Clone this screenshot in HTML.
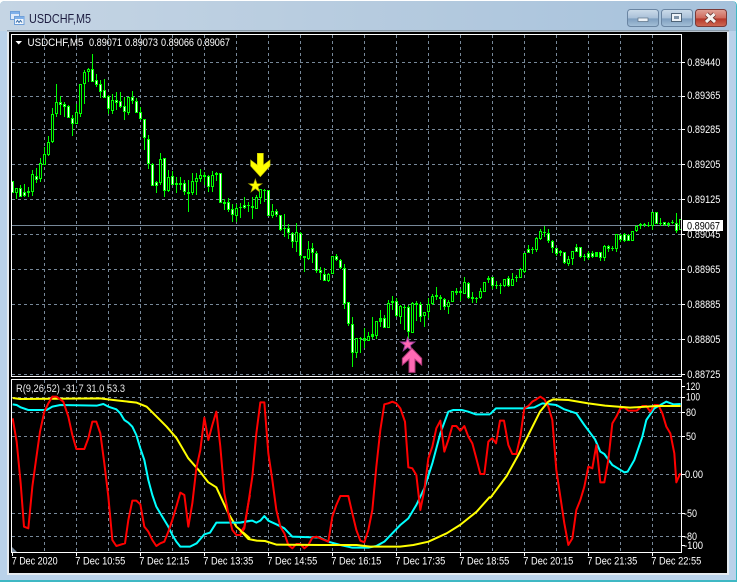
<!DOCTYPE html>
<html><head><meta charset="utf-8"><title>USDCHF,M5</title>
<style>html,body{margin:0;padding:0;background:#fff;overflow:hidden}svg{display:block}text{font-family:"Liberation Sans",sans-serif;fill:#fff;font-size:10.6px}</style></head>
<body>
<svg width="739" height="582" viewBox="0 0 739 582" xmlns="http://www.w3.org/2000/svg">
<defs>
<linearGradient id="tb" x1="0" x2="1" y1="0" y2="0"><stop offset="0" stop-color="#c5d5e4"/><stop offset=".5" stop-color="#b6cbdf"/><stop offset="1" stop-color="#a6c2dc"/></linearGradient>
<linearGradient id="bt" x1="0" x2="0" y1="0" y2="1"><stop offset="0" stop-color="#cddcea"/><stop offset=".5" stop-color="#a9c0d8"/><stop offset=".55" stop-color="#7f9fc0"/><stop offset="1" stop-color="#a5c0d8"/></linearGradient>
<linearGradient id="cl" x1="0" x2="0" y1="0" y2="1"><stop offset="0" stop-color="#e0a298"/><stop offset=".5" stop-color="#cf6a5c"/><stop offset=".55" stop-color="#b5382a"/><stop offset="1" stop-color="#cf6a55"/></linearGradient>
</defs>
<rect width="739" height="582" fill="#fff"/>
<path d="M0 582V6Q0 1 5 1H732Q737 1 737 6V582Z" fill="#3fb8c4"/>
<path d="M0 580V6Q0 1 5 1H731Q736 1 736 6V580Z" fill="#bad2ea"/>
<path d="M0 31V6Q0 1 5 1H731Q736 1 736 6V31Z" fill="url(#tb)"/>
<rect x="7" y="30" width="722" height="545" fill="#e4eaf0"/>
<rect x="7" y="30" width="722" height="1.500" fill="#8a9aa8"/>
<rect x="9" y="32" width="718" height="541" fill="#000"/>

<!-- title bar -->
<g>
<rect x="10.500" y="11.500" width="9" height="8" fill="#dfeafa" stroke="#6f9fd8"/>
<rect x="11" y="12" width="8" height="2" fill="#7fb0ea"/>
<rect x="14.500" y="16.500" width="9.500" height="8" fill="#f2f7fd" stroke="#6f9fd8"/>
<rect x="15" y="17" width="9" height="2" fill="#7fb0ea"/>
<path d="M16 22.500l1.500-2 1.500 2 1.500-2 1.500 2" fill="none" stroke="#3a6ea8"/>
<text x="29" y="23" style="font-size:12.500px;fill:#1c1c40" textLength="62" lengthAdjust="spacingAndGlyphs">USDCHF,M5</text>
<rect x="627.500" y="9.500" width="31" height="17" rx="3" fill="url(#bt)" stroke="#6a85a2"/>
<rect x="638" y="18" width="10" height="3.500" fill="#eef3f8" stroke="#5b6f84" stroke-width=".7"/>
<rect x="661.500" y="9.500" width="31" height="17" rx="3" fill="url(#bt)" stroke="#6a85a2"/>
<rect x="671.500" y="13.500" width="10" height="8" fill="#eef3f8" stroke="#4f6478" stroke-width="1"/>
<rect x="674" y="16" width="5" height="3" fill="#7f93a8"/>
<rect x="695.500" y="9.500" width="31" height="17" rx="3" fill="url(#cl)" stroke="#7a3a38"/>
<path d="M706.500 14l8.500 8M714.500 14l-8.500 8" stroke="#5a2a28" stroke-width="4.500"/>
<path d="M706.500 14l8.500 8M714.500 14l-8.500 8" stroke="#f6f2f0" stroke-width="3"/>
</g>

<!-- grid -->
<g stroke="#778899" stroke-width="1" stroke-dasharray="3 3" shape-rendering="crispEdges" fill="none">
<path d="M12 62.500H681M12 96.500H681M12 129.500H681M12 164.500H681M12 199.500H681M12 234.500H681M12 269.500H681M12 304.500H681M12 339.500H681M12 374.500H681"/>
<path d="M44.500 35V376M76.500 35V376M108.500 35V376M140.500 35V376M172.500 35V376M204.500 35V376M236.500 35V376M268.500 35V376M300.500 35V376M332.500 35V376M364.500 35V376M396.500 35V376M428.500 35V376M460.500 35V376M492.500 35V376M524.500 35V376M556.500 35V376M588.500 35V376M620.500 35V376M652.500 35V376"/>
<path d="M12 397.500H681M12 412.500H681M12 436.500H681M12 474.500H681M12 513.500H681M12 536.500H681"/>
<path d="M44.500 380V552M76.500 380V552M108.500 380V552M140.500 380V552M172.500 380V552M204.500 380V552M236.500 380V552M268.500 380V552M300.500 380V552M332.500 380V552M364.500 380V552M396.500 380V552M428.500 380V552M460.500 380V552M492.500 380V552M524.500 380V552M556.500 380V552M588.500 380V552M620.500 380V552M652.500 380V552"/>
</g>
<rect x="12" y="225" width="669" height="1" fill="#778899"/>

<!-- candles -->
<g transform="translate(.5 0)" fill="none" shape-rendering="crispEdges">
<path stroke="#00ff00" d="M12 181V193M16 188V199M20 185V197M24 184V197M28 187V197M32 170V196M36 168V183M40 158V182M44 147V165M48 136V156M52 108V143M56 84V117M60 96V115M64 102V117M68 105V118M72 115V136M76 104V124M80 84V117M84 70V104M88 68V82M92 54V82M96 74V87M100 80V98M104 79V98M108 95V114M112 94V114M116 92V110M120 92V108M124 97V120M128 97V115M132 91V104M136 98V113M140 107V120M144 119V150M148 135V169M152 163V186M156 181V193M160 153V185M164 158V197M168 170V192M172 171V185M176 177V193M180 177V190M184 180V195M188 180V212M192 173V195M196 173V195M200 169V182M204 172V185M208 175V192M212 171V192M216 172V181M220 173V203M224 199V210M228 198V212M232 204V222M236 204V222M240 203V218M244 197V209M248 202V212M252 197V219M256 195V209M260 189V204M264 189V202M268 190V216M272 204V218M276 209V217M280 215V231M284 214V237M288 224V239M292 232V248M296 223V252M300 232V259M304 256V272M308 241V260M312 243V263M316 251V273M320 267V280M324 268V281M328 273V282M332 256V274M336 254V261M340 259V269M344 264V309M348 302V326M352 317V367M356 338V358M360 337V353M364 328V348M368 332V341M372 317V339M376 321V339M380 310V327M384 315V328M388 300V328M392 296V310M396 298V317M400 305V324M404 305V330M408 305V340M412 302V333M416 301V321M420 302V322M424 312V327M428 298V318M432 294V305M436 287V300M440 295V310M444 298V310M448 300V314M452 291V302M456 288V295M460 289V301M464 277V294M468 282V299M472 292V303M476 297V303M480 288V299M484 282V292M488 276V283M492 277V289M496 281V289M500 283V294M504 279V287M508 276V287M512 273V286M516 275V282M520 268V278M524 253V273M528 245V253M532 247V254M536 237V252M540 229V240M544 226V237M548 229V243M552 240V253M556 248V256M560 250V256M564 252V264M568 256V266M572 251V265M576 244V252M580 247V258M584 254V261M588 251V260M592 251V258M596 252V257M600 252V261M604 245V261M608 245V252M612 246V251M616 234V252M620 234V242M624 233V242M628 234V241M632 231V241M636 225V232M640 223V229M644 223V227M648 222V227M652 212V230M656 212V224M660 218V226M664 222V226M668 222V227M672 220V224M676 213V233M680 219V230"/>
<path stroke="#00ff00" stroke-width="3" d="M12 181V193M16 188V193M20 188V197M24 192V196M28 191V193M32 174V192M36 176V180M40 163V179M44 154V165M48 142V155M52 114V142M56 102V114M60 102V105M64 104V107M68 106V118M72 118V124M76 112V124M80 84V114M84 72V84M88 69V72M92 69V82M96 80V85M100 84V92M104 90V98M108 96V109M112 100V111M116 100V103M120 101V107M124 106V112M128 97V113M132 97V101M136 101V113M140 112V119M144 119V138M148 139V164M152 164V186M156 182V186M160 159V183M164 158V191M168 177V191M172 176V185M176 183V185M180 183V185M184 183V192M188 192V194M192 181V193M196 178V182M200 175V179M204 175V177M208 176V187M212 175V187M216 173V175M220 173V203M224 202V204M228 202V210M232 209V215M236 208V216M240 207V208M244 205V208M248 205V206M252 206V208M256 197V209M260 189V198M264 190V191M268 190V216M272 211V216M276 211V215M280 215V230M284 228V229M288 228V233M292 233V242M296 232V242M300 233V256M304 256V258M308 249V259M312 248V253M316 253V271M320 270V273M324 274V281M328 274V281M332 256V274M336 256V260M340 260V268M344 268V304M348 302V324M352 324V353M356 338V353M360 338V339M364 338V341M368 336V341M372 334V337M376 321V336M380 318V322M384 318V328M388 303V328M392 301V303M396 301V316M400 306V317M404 307V308M408 307V332M412 303V333M416 303V305M420 304V317M424 312V316M428 304V312M432 296V304M436 295V297M440 297V299M444 299V307M448 302V307M452 291V302M456 291V293M460 291V293M464 282V294M468 283V298M472 297V299M476 298V299M480 291V298M484 282V292M488 278V280M492 277V286M496 285V286M500 285V286M504 279V286M508 278V286M512 279V286M516 277V278M520 269V278M524 253V272M528 249V253M532 249V250M536 238V250M540 231V239M544 232V233M548 233V241M552 241V248M556 248V254M560 251V253M564 252V263M568 259V264M572 251V259M576 247V252M580 247V257M584 256V257M588 253V258M592 253V257M596 252V257M600 252V258M604 246V258M608 246V249M612 248V249M616 234V249M620 235V240M624 234V241M628 235V241M632 231V241M636 226V231M640 224V226M644 224V225M648 225V226M652 212V226M656 212V224M660 223V224M664 222V225M668 223V225M672 222V223M676 223V231M680 219V230"/>
<path stroke="#fff" d="M12 182V192M20 189V196M24 193V195M36 177V179M60 103V104M64 105V106M68 107V117M72 119V123M92 70V81M96 81V84M100 85V91M104 91V97M108 97V108M116 101V102M120 102V106M124 107V111M132 98V100M136 102V112M140 113V118M144 120V137M148 140V163M152 165V185M156 183V185M164 159V190M172 177V184M184 184V191M208 177V186M220 174V202M228 203V209M232 210V214M244 206V207M268 191V215M276 212V214M280 216V229M288 229V232M292 234V241M300 234V255M312 249V252M316 254V270M320 271V272M324 275V280M336 257V259M340 261V267M344 269V303M348 303V323M352 325V352M384 319V327M396 302V315M408 308V331M420 305V316M440 298V298M444 300V306M468 284V297M492 278V285M508 279V285M528 250V252M548 234V240M552 242V247M556 249V253M564 253V262M576 248V251M580 248V256M588 254V257M592 254V256M600 253V257M608 247V248M620 236V239M624 235V240M628 236V240M656 213V223M664 223V224M676 224V230"/>
<path stroke="#000" d="M16 189V192M32 175V191M40 164V178M44 155V164M48 143V154M52 115V141M56 103V113M76 113V123M80 85V113M84 73V83M88 70V71M112 101V110M128 98V112M160 160V182M168 178V190M192 182V192M196 179V181M200 176V178M212 176V186M236 209V215M256 198V208M260 190V197M272 212V215M296 233V241M308 250V258M328 275V280M332 257V273M356 339V352M368 337V340M376 322V335M388 304V327M400 307V316M412 304V332M424 313V315M428 305V311M432 297V303M448 303V306M452 292V301M464 283V293M480 292V297M484 283V291M504 280V285M512 280V285M520 270V277M524 254V271M536 239V249M540 232V238M568 260V263M572 252V258M604 247V257M616 235V248M632 232V240M636 227V230M652 213V225M680 220V229"/>
</g>

<!-- markers -->
<g transform="translate(240 140) scale(.33333)">
<path fill="#ffff00" stroke="#c8c800" stroke-width="2" d="M52 40H70V75L90 60V78L61 110L32 78V60L52 75Z"/>
<path fill="#ffff00" stroke="#a8a800" stroke-width="2" d="M46 117L51 131L66 131L54 140L59 156L46 146L33 156L38 140L26 131L41 131Z"/>
<path fill="#ff69b4" stroke="#a040a0" stroke-width="3" d="M503 592L508 606L524 606L511 616L516 632L503 622L490 632L495 616L482 606L498 606Z"/>
<path fill="#ff69b4" stroke="#b03878" stroke-width="3" d="M516 625L545 655V675L525 658V697H507V658L487 675V655Z"/>
</g>

<!-- indicator lines -->
<g fill="none" stroke-width="6" stroke-linejoin="round">
<g transform="translate(0 370) scale(.33333)">
<polyline stroke="#ffff00" points="38,84 60,87 300,85 340,90 410,98 440,110 475,145 500,170 530,205 565,265 600,305 625,337 649,352 685,430 709,470 750,505"/>
<polyline stroke="#00ffff" points="38,103 50,105 62,112 85,120 140,120 157,110 181,105 290,107 310,102 325,110 349,118 361,130 373,150 385,158 397,170 409,195 421,235 433,270 445,330 457,375 469,410 481,430 505,470 517,495 529,515 541,530 570,530 590,520 613,493 630,488 649,458 720,458 750,453"/>
<polyline stroke="#ff0000" points="38,145 50,215 62,340 72,470 85,475 97,350 108,270 120,185 133,125 145,100 157,80 170,80 190,95 205,140 217,195 229,237 253,237 265,205 277,155 289,155 301,190 313,280 325,380 337,510 349,528 375,520 385,450 397,392 409,392 421,403 433,470 445,485 457,510 469,528 481,520 493,515 505,485 517,450 529,410 541,368 553,375 565,470 577,400 589,295 601,240 613,143 625,210 637,165 649,125 661,230 673,370 685,430 697,480 709,495 721,495 733,475 745,400 750,375"/>
</g>
<g transform="translate(240 370) scale(.33333)">
<polyline stroke="#00ffff" points="0,458 25,453 37,452 49,458 61,452 73,438 85,452 109,463 133,475 157,500 241,503 265,515 301,525 337,533 385,533 409,528 433,515 457,490 481,465 505,445 529,405 553,355 577,280 601,190 625,125 640,120 665,120 685,125 707,133 750,133"/>
<polyline stroke="#ff0000" points="0,490 13,470 25,400 37,320 49,190 61,97 73,97 85,250 97,330 109,420 121,470 133,490 145,525 157,535 169,522 181,522 193,535 205,525 217,503 229,500 241,505 265,515 277,440 289,405 301,378 325,378 337,430 349,480 361,512 373,517 385,480 397,420 409,290 421,180 433,103 445,100 457,95 469,100 481,115 495,155 505,292 517,295 529,315 541,420 553,360 565,265 577,230 589,175 601,152 613,245 625,210 637,168 649,168 661,182 673,168 685,200 697,220 709,265 721,312 733,312 745,215 750,210"/>
<polyline stroke="#ffff00" points="0,480 25,507 50,512 75,513 110,524 240,525 350,525 390,530 480,530 520,525 565,515 620,490 660,465 710,425 750,380"/>
</g>
<g transform="translate(490 370) scale(.33333)">
<polyline stroke="#00ffff" points="0,133 18,115 100,115 133,112 157,100 199,105 223,118 259,130 283,165 315,208 331,245 343,252 367,285 403,307 413,305 433,270 457,200 469,150 493,115 529,95 550,103 572,102"/>
<polyline stroke="#ff0000" points="0,210 7,205 18,220 30,152 42,152 55,225 67,252 79,252 91,200 103,115 115,108 127,95 139,88 151,80 163,88 175,110 187,150 199,300 211,380 223,460 235,525 247,505 259,420 271,390 283,350 295,290 307,295 319,225 331,337 343,337 355,270 367,160 379,140 391,115 403,112 415,122 440,122 457,108 469,108 481,125 493,105 505,105 517,130 529,170 541,190 553,250 559,337 570,312 572,312"/>
<polyline stroke="#ffff00" points="0,385 50,318 85,255 115,195 150,125 175,95 190,88 235,90 295,100 345,107 420,113 500,108 572,108"/>
</g>
</g>

<!-- frames -->
<g fill="#fff" shape-rendering="crispEdges">
<rect x="11" y="34" width="671" height="1"/>
<rect x="11" y="34" width="1" height="343"/>
<rect x="681" y="34" width="1" height="343"/>
<rect x="11" y="376" width="671" height="1"/>
<rect x="11" y="379" width="671" height="1"/>
<rect x="11" y="379" width="1" height="174"/>
<rect x="681" y="379" width="1" height="174"/>
<rect x="11" y="552" width="671" height="1"/>
<path d="M682 62h3v1h-3zM682 96h3v1h-3zM682 129h3v1h-3zM682 164h3v1h-3zM682 199h3v1h-3zM682 234h3v1h-3zM682 269h3v1h-3zM682 304h3v1h-3zM682 339h3v1h-3zM682 374h3v1h-3zM682 386h3v1h-3zM682 397h3v1h-3zM682 412h3v1h-3zM682 436h3v1h-3zM682 474h3v1h-3zM682 513h3v1h-3zM682 536h3v1h-3zM682 545h3v1h-3z"/>
<path d="M12 553h1v3h-1zM76 553h1v3h-1zM140 553h1v3h-1zM204 553h1v3h-1zM268 553h1v3h-1zM332 553h1v3h-1zM396 553h1v3h-1zM460 553h1v3h-1zM524 553h1v3h-1zM588 553h1v3h-1zM652 553h1v3h-1z"/>
</g>
<path d="M12 547L17 552H12Z" fill="#778899"/>
<path d="M15.500 41H22L18.700 44.500Z" fill="#fff"/>

<!-- text -->
<g>
<text x="27.500" y="46" textLength="56" lengthAdjust="spacingAndGlyphs">USDCHF,M5</text>
<text x="89" y="46" textLength="33" lengthAdjust="spacingAndGlyphs">0.89071</text>
<text x="125" y="46" textLength="33" lengthAdjust="spacingAndGlyphs">0.89073</text>
<text x="161" y="46" textLength="33" lengthAdjust="spacingAndGlyphs">0.89066</text>
<text x="197" y="46" textLength="33" lengthAdjust="spacingAndGlyphs">0.89067</text>
<text x="16" y="392" textLength="109" lengthAdjust="spacingAndGlyphs" style="fill:#e8e8e8">R(9,26,52) -31.7 31.0 53.3</text>
<text x="687.300" y="66" textLength="33" lengthAdjust="spacingAndGlyphs">0.89440</text>
<text x="687.300" y="99" textLength="33" lengthAdjust="spacingAndGlyphs">0.89365</text>
<text x="687.300" y="133" textLength="33" lengthAdjust="spacingAndGlyphs">0.89285</text>
<text x="687.300" y="168" textLength="33" lengthAdjust="spacingAndGlyphs">0.89205</text>
<text x="687.300" y="203" textLength="33" lengthAdjust="spacingAndGlyphs">0.89125</text>
<text x="687.300" y="238" textLength="33" lengthAdjust="spacingAndGlyphs">0.89045</text>
<text x="687.300" y="273" textLength="33" lengthAdjust="spacingAndGlyphs">0.88965</text>
<text x="687.300" y="308" textLength="33" lengthAdjust="spacingAndGlyphs">0.88885</text>
<text x="687.300" y="343" textLength="33" lengthAdjust="spacingAndGlyphs">0.88805</text>
<text x="687.300" y="378" textLength="33" lengthAdjust="spacingAndGlyphs">0.88725</text>
<rect x="683" y="220" width="40" height="11" fill="#fff"/>
<text x="687" y="229.500" textLength="33" lengthAdjust="spacingAndGlyphs" style="fill:#000">0.89067</text>
<text x="686" y="390" textLength="14" lengthAdjust="spacingAndGlyphs">120</text>
<text x="686" y="400.500" textLength="14" lengthAdjust="spacingAndGlyphs">100</text>
<text x="686" y="416" textLength="10" lengthAdjust="spacingAndGlyphs">80</text>
<text x="686" y="440" textLength="10" lengthAdjust="spacingAndGlyphs">50</text>
<text x="685" y="478" textLength="18" lengthAdjust="spacingAndGlyphs">0.00</text>
<text x="684" y="517" textLength="13" lengthAdjust="spacingAndGlyphs">-50</text>
<text x="684" y="540" textLength="13" lengthAdjust="spacingAndGlyphs">-80</text>
<text x="684" y="549" textLength="19" lengthAdjust="spacingAndGlyphs">-100</text>
<text x="11.700" y="564.500" textLength="46" lengthAdjust="spacingAndGlyphs">7 Dec 2020</text>
<text x="75.300" y="564.500" textLength="50" lengthAdjust="spacingAndGlyphs">7 Dec 10:55</text>
<text x="139.300" y="564.500" textLength="50" lengthAdjust="spacingAndGlyphs">7 Dec 12:15</text>
<text x="203.300" y="564.500" textLength="50" lengthAdjust="spacingAndGlyphs">7 Dec 13:35</text>
<text x="267.300" y="564.500" textLength="50" lengthAdjust="spacingAndGlyphs">7 Dec 14:55</text>
<text x="331.300" y="564.500" textLength="50" lengthAdjust="spacingAndGlyphs">7 Dec 16:15</text>
<text x="395.300" y="564.500" textLength="50" lengthAdjust="spacingAndGlyphs">7 Dec 17:35</text>
<text x="459.300" y="564.500" textLength="50" lengthAdjust="spacingAndGlyphs">7 Dec 18:55</text>
<text x="523.300" y="564.500" textLength="50" lengthAdjust="spacingAndGlyphs">7 Dec 20:15</text>
<text x="587.300" y="564.500" textLength="50" lengthAdjust="spacingAndGlyphs">7 Dec 21:35</text>
<text x="651.300" y="564.500" textLength="50" lengthAdjust="spacingAndGlyphs">7 Dec 22:55</text>
</g>
</svg>
</body></html>
